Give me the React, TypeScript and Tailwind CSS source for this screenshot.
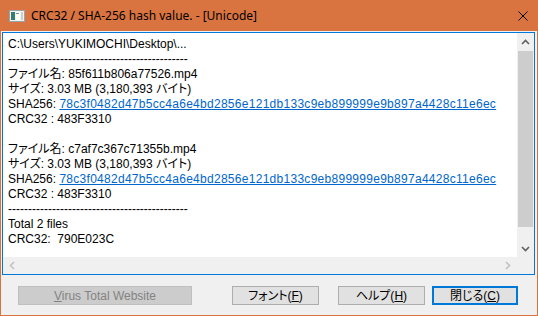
import React from "react";

const FONT = { fontFamily: '"Liberation Sans", "Noto Sans CJK JP", sans-serif' };

function Hash({ v }: { v: string }) {
  return <span className="text-[#0066cc] underline tracking-[0.28px]">{v}</span>;
}

function UpChevron({ color }: { color: string }) {
  return (
    <svg width="9" height="6" viewBox="0 0 9 6">
      <path d="M1 5 L4.5 1.5 L8 5" fill="none" stroke={color} strokeWidth="1.6" />
    </svg>
  );
}
function DownChevron({ color }: { color: string }) {
  return (
    <svg width="9" height="6" viewBox="0 0 9 6">
      <path d="M1 1 L4.5 4.5 L8 1" fill="none" stroke={color} strokeWidth="1.6" />
    </svg>
  );
}
function LeftChevron({ color }: { color: string }) {
  return (
    <svg width="6" height="9" viewBox="0 0 6 9">
      <path d="M5 1 L1.5 4.5 L5 8" fill="none" stroke={color} strokeWidth="1.6" />
    </svg>
  );
}
function RightChevron({ color }: { color: string }) {
  return (
    <svg width="6" height="9" viewBox="0 0 6 9">
      <path d="M1 1 L4.5 4.5 L1 8" fill="none" stroke={color} strokeWidth="1.6" />
    </svg>
  );
}

export default function App() {
  const hash = "78c3f0482d47b5cc4a6e4bd2856e121db133c9eb899999e9b897a4428c11e6ec";
  return (
    <div className="w-[538px] h-[316px] bg-[#d97440] flex flex-col" style={FONT}>
      {/* Title bar */}
      <div className="h-[31px] flex items-center shrink-0">
        <div className="ml-[9px] w-[16px] h-[12px] flex items-center">
          <svg width="16" height="12" viewBox="0 0 16 12">
            <rect x="0.5" y="0.5" width="15" height="11" fill="#f2f2f2" stroke="#9aa4a8" />
            <rect x="2" y="2" width="4" height="8" fill="#2f7f74" />
            <rect x="7" y="2" width="4" height="8" fill="#ffffff" />
            <rect x="12" y="2" width="2" height="8" fill="#c9ced0" />
            <rect x="7" y="3" width="3" height="1" fill="#7d8a8e" />
          </svg>
        </div>
        <div
          className="ml-[6px] text-[12px] text-black leading-none"
          style={{ fontFamily: '"Noto Sans", sans-serif' }}
        >
          CRC32 / SHA-256 hash value. - [Unicode]
        </div>
        <div className="ml-auto mr-[10px] w-[10px] h-[10px] flex">
          <svg width="10" height="10" viewBox="0 0 10 10">
            <path d="M0.5 0.5 L9.5 9.5 M9.5 0.5 L0.5 9.5" stroke="#000" strokeWidth="1" />
          </svg>
        </div>
      </div>

      {/* Body */}
      <div className="flex-1 mx-[1px] mb-[1px] bg-[#f0f0f0] flex flex-col">
        <div className="mt-[1px] ml-[1px] w-[533px] h-[243px] border border-[#0078d7] bg-white flex flex-col">
          <div className="flex flex-1 min-h-0">
            <div className="flex-1 pl-[5px] pt-[4px] text-[12px] leading-[15px] text-black whitespace-pre overflow-hidden [font-feature-settings:'palt']">
              <div>C:\Users\YUKIMOCHI\Desktop\...</div>
              <div>---------------------------------------------</div>
              <div>ファイル名: 85f611b806a77526.mp4</div>
              <div>サイズ: 3.03 MB (3,180,393 バイト)</div>
              <div>
                SHA256: <Hash v={hash} />
              </div>
              <div>CRC32 : 483F3310</div>
              <div>&nbsp;</div>
              <div>ファイル名: c7af7c367c71355b.mp4</div>
              <div>サイズ: 3.03 MB (3,180,393 バイト)</div>
              <div>
                SHA256: <Hash v={hash} />
              </div>
              <div>CRC32 : 483F3310</div>
              <div>---------------------------------------------</div>
              <div>Total 2 files</div>
              <div>CRC32:  790E023C</div>
            </div>
            {/* vertical scrollbar */}
            <div className="w-[17px] bg-[#f0f0f0] flex flex-col">
              <div className="h-[17px] flex items-center justify-center">
                <UpChevron color="#606060" />
              </div>
              <div className="flex-1 flex flex-col">
                <div className="mx-[1px] mt-[1px] h-[176px] bg-[#cdcdcd]" />
              </div>
              <div className="h-[17px] flex items-center justify-center">
                <DownChevron color="#606060" />
              </div>
            </div>
          </div>
          {/* horizontal scrollbar */}
          <div className="h-[17px] flex bg-[#f0f0f0] shrink-0">
            <div className="flex-1 flex items-center justify-between px-[6px]">
              <LeftChevron color="#c2c2c2" />
              <RightChevron color="#c2c2c2" />
            </div>
            <div className="w-[17px] bg-[#f0f0f0]" />
          </div>
        </div>

        {/* Buttons */}
        <div className="mt-[11px] flex text-[12px] [font-feature-settings:'palt']">
          <div className="ml-[17px] w-[174px] h-[19px] bg-[#cccccc] border border-[#bfbfbf] flex items-center justify-center text-[#838383]">
            <span>
              <span className="underline">V</span>irus Total Website
            </span>
          </div>
          <div className="ml-[40px] w-[87px] h-[19px] bg-[#e1e1e1] border border-[#adadad] flex items-center justify-center text-black">
            <span>
              フォント(<span className="underline">F</span>)
            </span>
          </div>
          <div className="ml-[19px] w-[87px] h-[19px] bg-[#e1e1e1] border border-[#adadad] flex items-center justify-center text-black">
            <span>
              ヘルプ(<span className="underline">H</span>)
            </span>
          </div>
          <div className="ml-[7px] w-[86px] h-[19px] bg-[#e1e1e1] border-2 border-[#0078d7] flex items-center justify-center text-black">
            <span>
              閉じる(<span className="underline">C</span>)
            </span>
          </div>
        </div>
      </div>
    </div>
  );
}
